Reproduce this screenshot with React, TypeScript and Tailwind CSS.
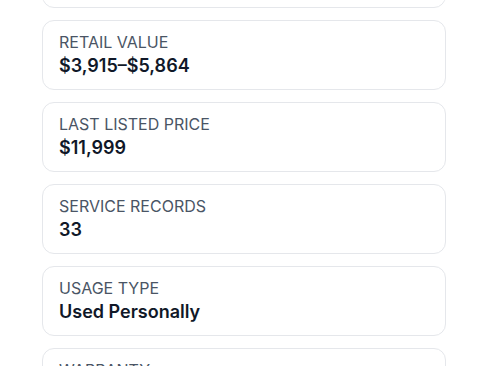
const details = [
  { label: "Mileage", value: "48,210 mi" },
  { label: "Retail Value", value: "$3,915–$5,864" },
  { label: "Last Listed Price", value: "$11,999" },
  { label: "Service Records", value: "33" },
  { label: "Usage Type", value: "Used Personally" },
  { label: "Warranty", value: "Expired" },
];

const DetailCard = ({ label, value }: { label: string; value: string }) => (
  <div className="rounded-xl border border-gray-200 bg-white px-4 pt-[9px] pb-[11px]">
    <div className="text-base leading-6 uppercase text-gray-600">{label}</div>
    <div className="text-lg leading-6 font-semibold text-gray-900">{value}</div>
  </div>
);

export default function App() {
  return (
    <div
      className="h-[366px] overflow-hidden bg-white px-[42px]"
      style={{ fontFamily: "Inter, 'Noto Sans', sans-serif" }}
    >
      <div className="-mt-[62px] flex flex-col gap-3">
        {details.map((d) => (
          <DetailCard key={d.label} label={d.label} value={d.value} />
        ))}
      </div>
    </div>
  );
}
